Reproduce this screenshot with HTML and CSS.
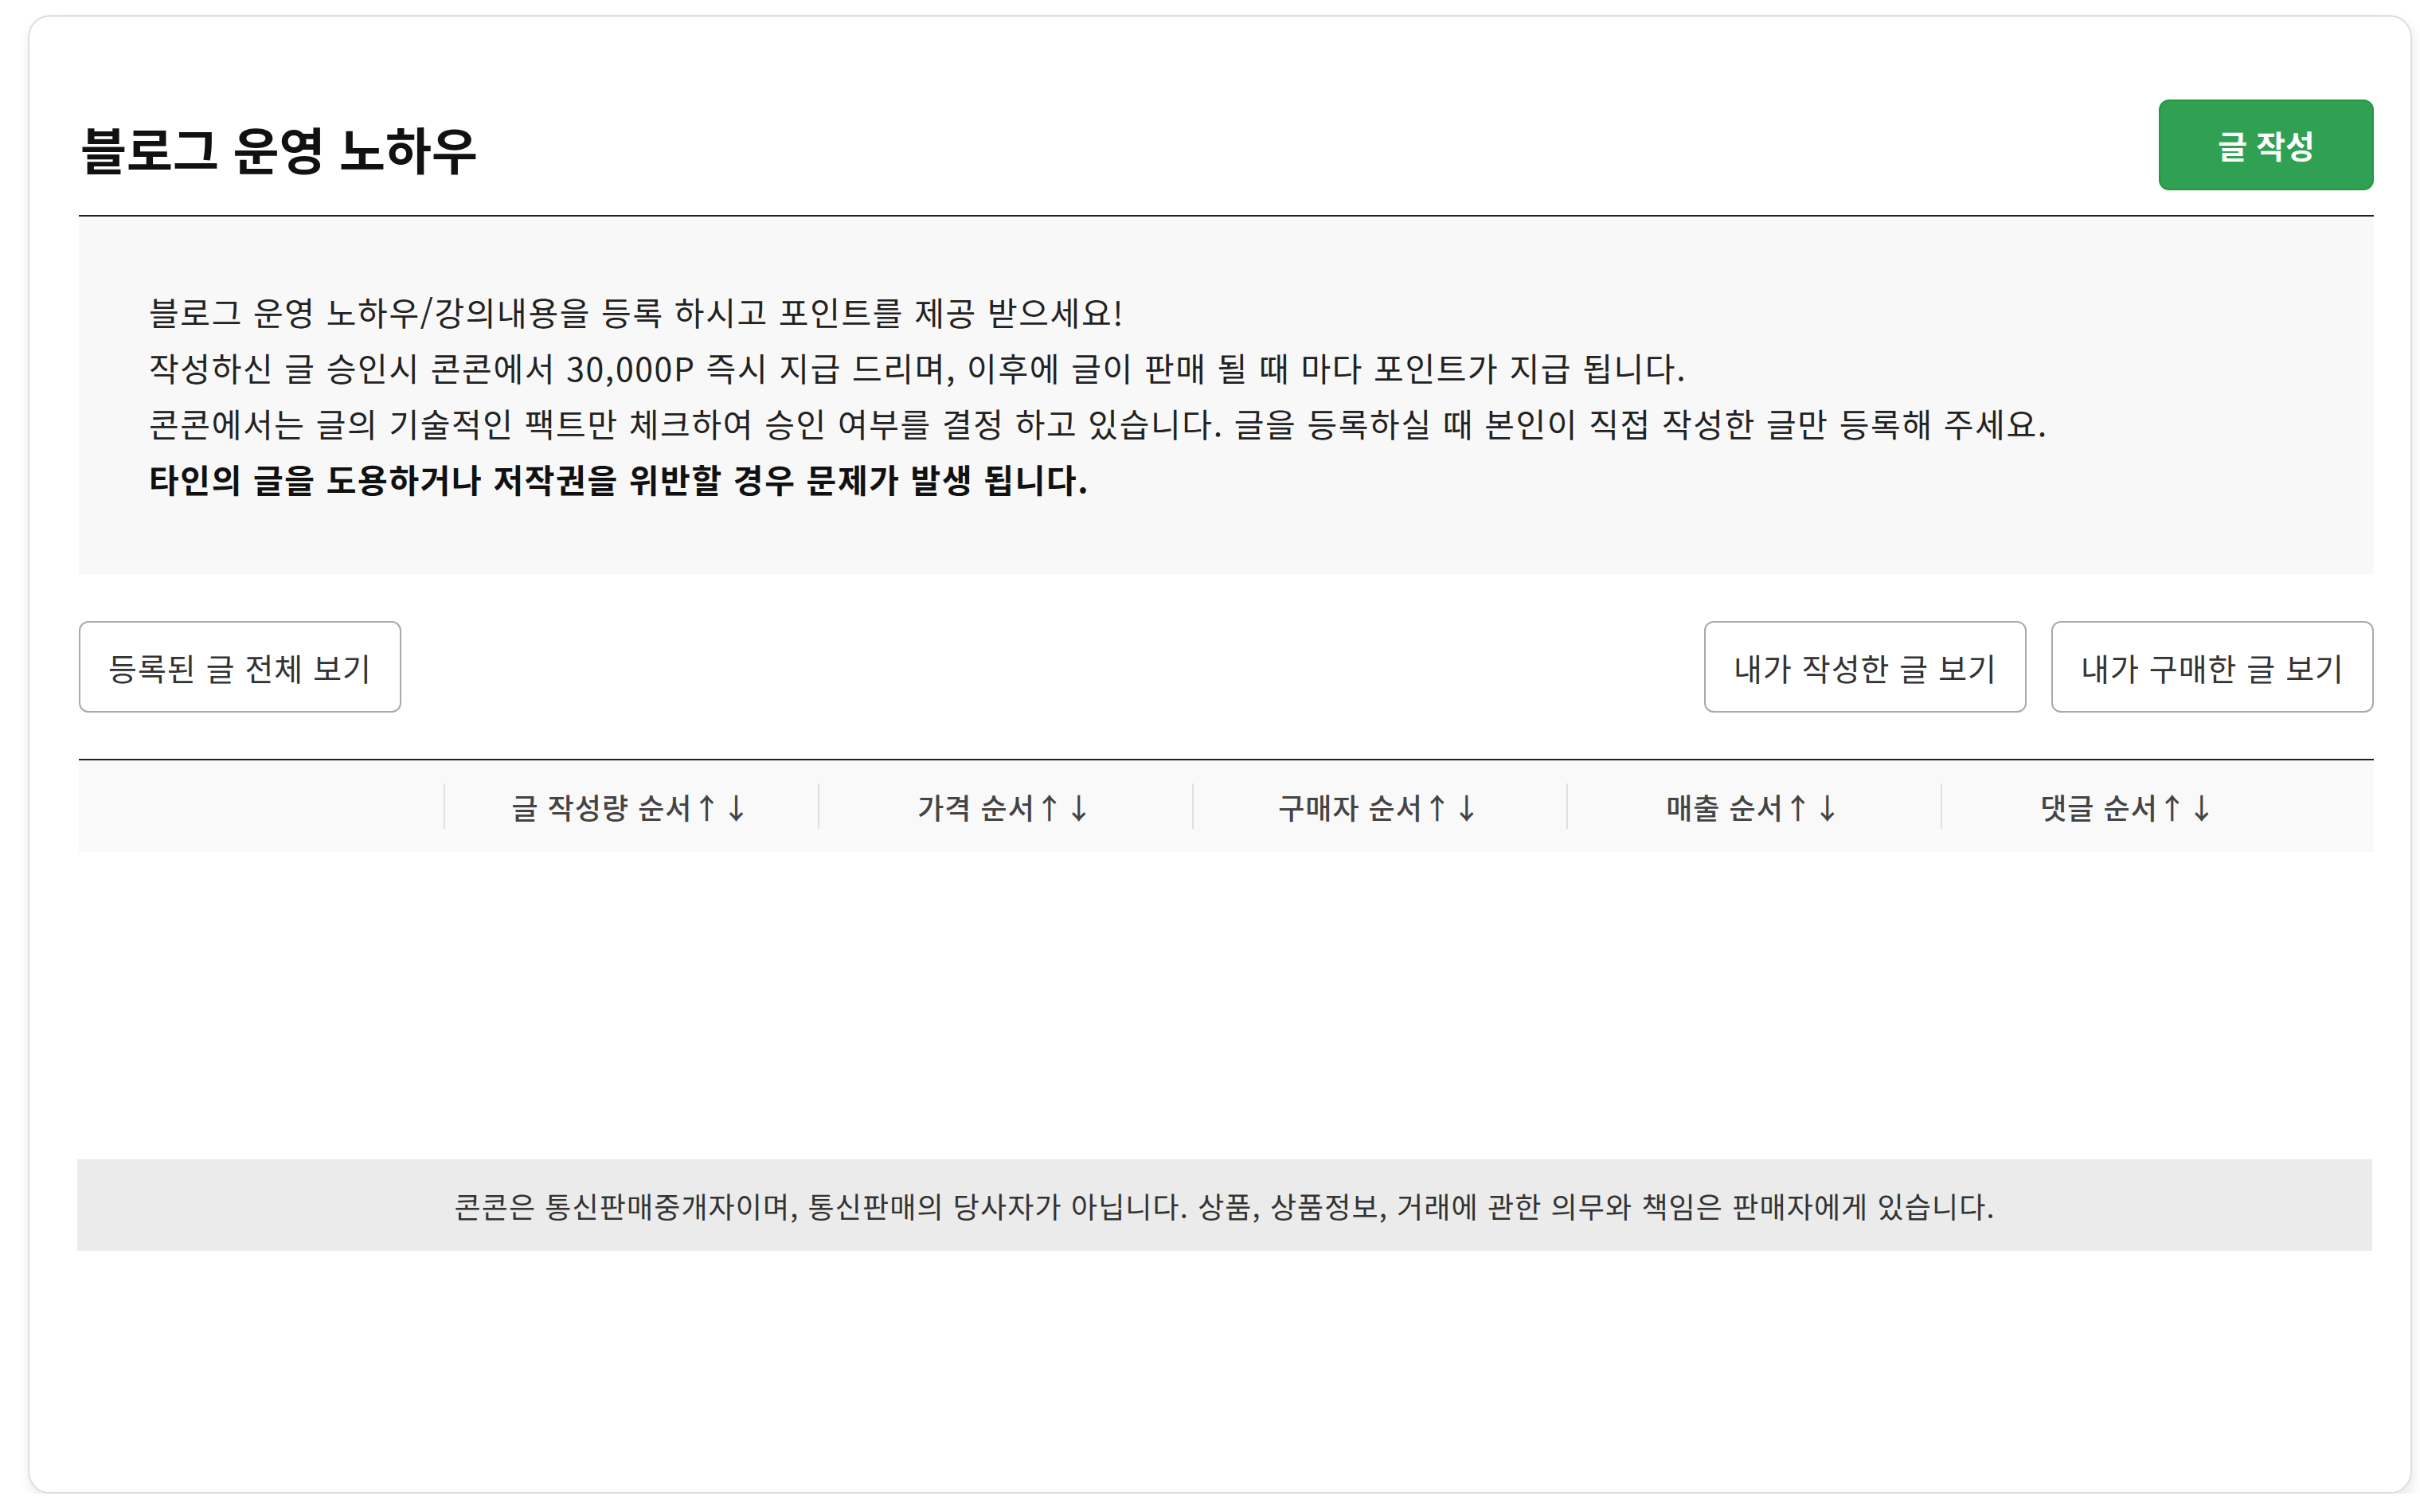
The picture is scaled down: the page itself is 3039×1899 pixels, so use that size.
FILE: index.html
```html
<!DOCTYPE html>
<html lang="ko">
<head>
    <meta charset="UTF-8">
    <meta name="viewport" content="width=device-width, initial-scale=1.0">
    <title>블로그 운영 노하우</title>
    <link rel="stylesheet" href="styles.css">
</head>
<body>
    <div class="card">
        <div class="board-head">
            <h1>블로그 운영 노하우</h1>
            <button class="write-btn">글 작성</button>
        </div>

        <div class="notice">
            <p>블로그 운영 노하우/강의내용을 등록 하시고 포인트를 제공 받으세요!</p>
            <p>작성하신 글 승인시 콘콘에서 30,000P 즉시 지급 드리며, 이후에 글이 판매 될 때 마다 포인트가 지급 됩니다.</p>
            <p>콘콘에서는 글의 기술적인 팩트만 체크하여 승인 여부를 결정 하고 있습니다. 글을 등록하실 때 본인이 직접 작성한 글만 등록해 주세요.</p>
            <p class="warn">타인의 글을 도용하거나 저작권을 위반할 경우 문제가 발생 됩니다.</p>
        </div>

        <div class="filter-row">
            <button class="line-btn">등록된 글 전체 보기</button>
            <div class="filter-right">
                <button class="line-btn">내가 작성한 글 보기</button>
                <button class="line-btn">내가 구매한 글 보기</button>
            </div>
        </div>

        <div class="sort-bar">
            <div class="sort-blank"></div>
            <div class="sort-item">글 작성량 순서↑↓</div>
            <div class="sort-item">가격 순서↑↓</div>
            <div class="sort-item">구매자 순서↑↓</div>
            <div class="sort-item">매출 순서↑↓</div>
            <div class="sort-item">댓글 순서↑↓</div>
            <div class="sort-blank"></div>
        </div>

        <div class="post-list"></div>

        <div class="legal">콘콘은 통신판매중개자이며, 통신판매의 당사자가 아닙니다. 상품, 상품정보, 거래에 관한 의무와 책임은 판매자에게 있습니다.</div>
    </div>
</body>
</html>
```

FILE: styles.css
```css
body {
    margin: 0;
    background: #fff;
    font-family: "Noto Sans CJK KR", "Noto Sans", sans-serif;
    color: #222;
}
.card {
    margin: 19px 0 0 35px;
    width: 2994px;
    box-sizing: border-box;
    padding: 104px 46px 303px 62px;
    background: #fff;
    border: 2px solid #dedede;
    border-radius: 28px;
    box-shadow: 2px 8px 16px rgba(0, 0, 0, 0.09);
}
.board-head {
    display: flex;
    justify-content: space-between;
    align-items: center;
    padding-bottom: 31px;
    border-bottom: 2px solid #222;
}
.board-head h1 {
    margin: 6px 0 0 2px;
    font-size: 63px;
    font-weight: 700;
    color: #111;
}
.write-btn {
    width: 270px;
    height: 114px;
    background: #30a152;
    border: 2px solid #1f983f;
    border-radius: 13px;
    color: #fff;
    font-family: inherit;
    font-size: 40px;
    font-weight: 700;
    cursor: pointer;
}
.notice {
    background: #f8f8f8;
    padding: 84px 88px 85px;
}
.notice p {
    margin: 0;
    font-size: 41px;
    line-height: 70px;
    letter-spacing: 1.6px;
    color: #222;
}
.notice .warn {
    font-weight: 700;
    color: #111;
}
.filter-row {
    display: flex;
    justify-content: space-between;
    margin-top: 59px;
}
.filter-right {
    display: flex;
    gap: 31px;
}
.line-btn {
    width: 405px;
    height: 115px;
    background: #fff;
    border: 2px solid #aaa;
    border-radius: 12px;
    color: #333;
    font-family: inherit;
    font-size: 39px;
    letter-spacing: 1px;
    cursor: pointer;
}
.sort-bar {
    display: grid;
    grid-template-columns: 458px repeat(5, 470px) 1fr;
    align-items: center;
    height: 115px;
    margin-top: 58px;
    border-top: 2px solid #222;
    background: #f9f9f9;
}
.sort-item {
    display: flex;
    align-items: center;
    justify-content: center;
    height: 57px;
    border-left: 2px solid #e0e0e0;
    font-size: 36px;
    font-weight: 500;
    letter-spacing: 1px;
    color: #444;
    cursor: pointer;
}
.post-list {
    height: 386px;
}
.legal {
    margin: 0 2px 0 -2px;
    height: 115px;
    display: flex;
    align-items: center;
    justify-content: center;
    background: #ebebeb;
    font-size: 36px;
    letter-spacing: 1.1px;
    color: #333;
}
```
